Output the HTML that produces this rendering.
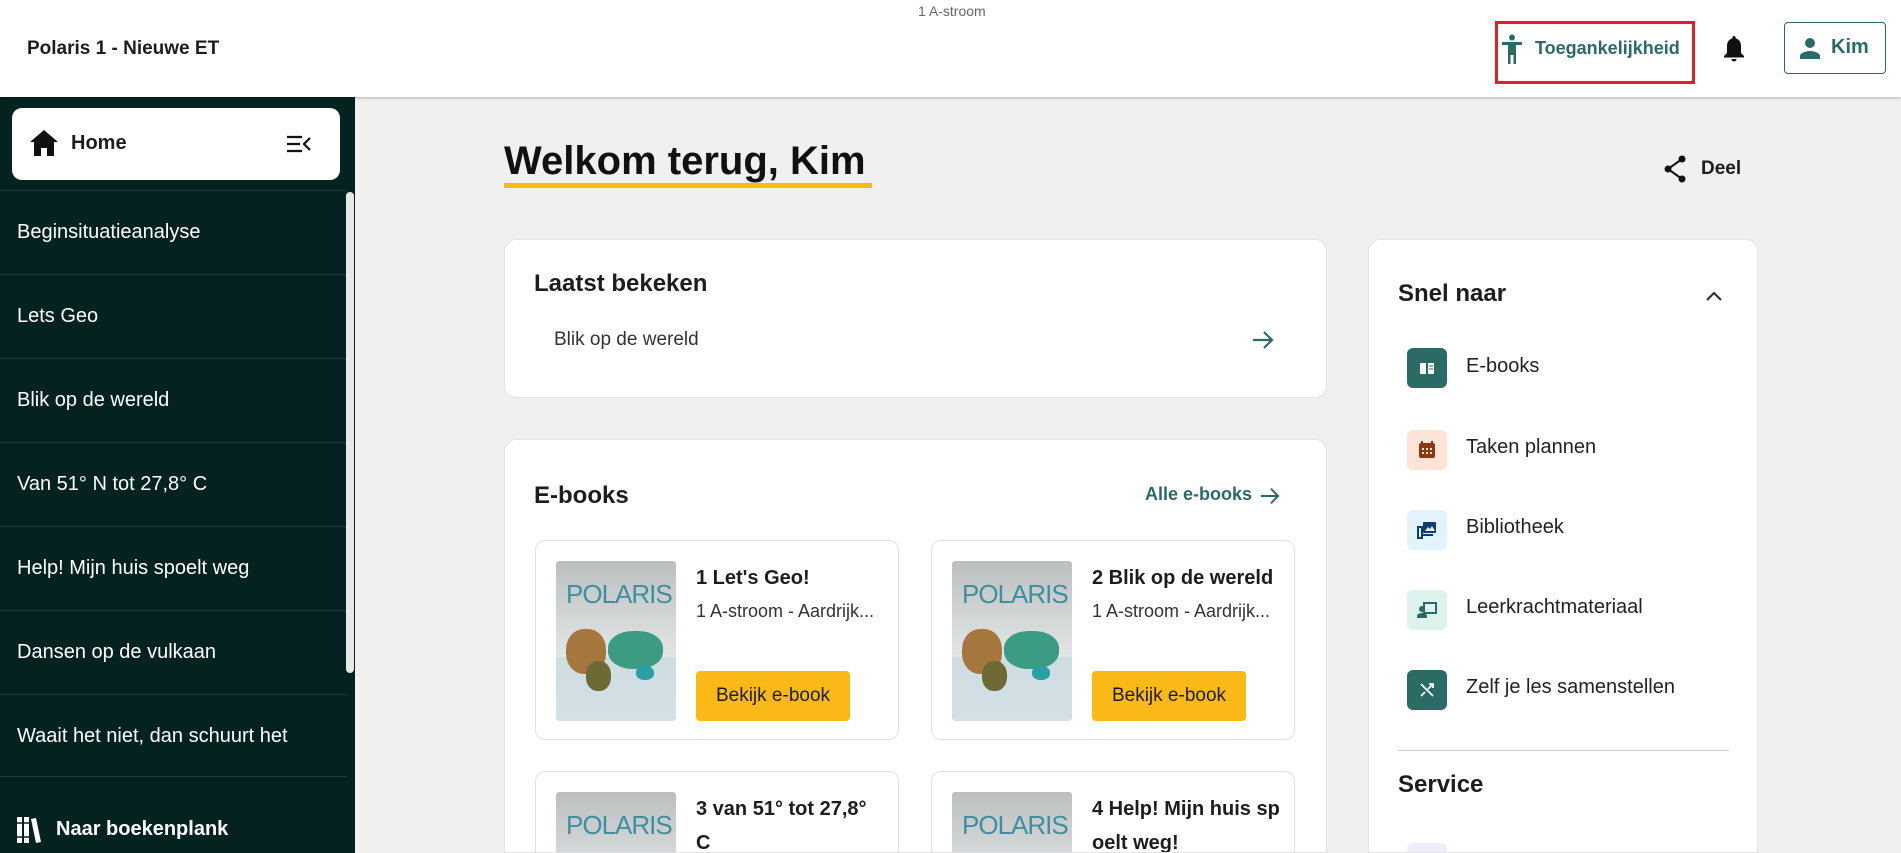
<!DOCTYPE html>
<html><head><meta charset="utf-8"><style>
*{box-sizing:border-box;margin:0;padding:0}
html,body{width:1901px;height:853px;overflow:hidden}
body{font-family:"Liberation Sans",sans-serif;background:#eff0ef;position:relative;color:#1d1d1b}
#wrap{position:absolute;left:0;top:0;width:1901px;height:853px;overflow:hidden}
.abs{position:absolute}
.hdr{left:0;top:0;width:1901px;height:97px;background:#fff;box-shadow:0 1px 3px rgba(0,0,0,.25);z-index:2}
.side{left:0;top:97px;width:355px;height:756px;background:#04221f;overflow:hidden}
.item{position:absolute;left:0;width:347px;height:84px;border-top:1px solid #1e3d39;color:#fff;font-size:20px;padding-left:17px;display:flex;align-items:center}
.card{background:#fff;border-radius:12px;border:1px solid #e3e5e4;overflow:hidden}
.bk{background:#fff;border-radius:10px;border:1px solid #e0e2e1;width:364px;height:200px}
.cover{position:absolute;left:20px;top:20px;width:120px;height:160px;background:linear-gradient(#bcbfbf,#e3e6e6 60%,#cfdde3 60%,#d3e1e7);border-radius:3px;overflow:hidden}
.cover .t{position:absolute;left:10px;top:18px;font-size:26px;color:#3f8fa0;letter-spacing:-1px}
.blob{position:absolute;border-radius:45%}
.btn{position:absolute;left:160px;top:130px;width:154px;height:50px;background:#fbb917;border-radius:4px;font-size:19px;display:flex;align-items:center;justify-content:center;color:#1d1d1b}
.bt{position:absolute;left:160px;top:20px;font-size:20px;font-weight:600;line-height:34px;width:190px}
.bs{position:absolute;left:160px;top:60px;font-size:18px;color:#333}
.q{position:absolute;left:38px;width:40px;height:40px;border-radius:6px;display:flex;align-items:center;justify-content:center}
.ql{position:absolute;left:97px;font-size:20px;color:#222}
</style></head><body><div id="wrap">
<div class="abs hdr">
 <div class="abs" style="left:27px;top:38px;font-size:19px;font-weight:700">Polaris 1 - Nieuwe ET</div>
 <div class="abs" style="left:918px;top:3px;font-size:14px;color:#666">1 A-stroom</div>
 <div class="abs" style="left:1495px;top:21px;width:200px;height:63px;border:3px solid #e31e24"></div>
 <svg class="abs" style="left:1500px;top:34px" width="24" height="30" viewBox="0 0 24 30"><circle cx="12" cy="3.5" r="3" fill="#2a6b66"/><path d="M2 8h20v3h-6v19h-2.5v-9h-3v9H8V11H2z" fill="#2a6b66"/></svg>
 <div class="abs" style="left:1535px;top:38px;font-size:18px;font-weight:600;color:#2a6b66">Toegankelijkheid</div>
 <svg class="abs" style="left:1722px;top:35px" width="24" height="28" viewBox="0 0 24 28"><path d="M12 1c-1 0-1.6.7-1.6 1.6v.8C6.5 4.4 5 7.6 5 11v7l-3 3v1.5h20V21l-3-3v-7c0-3.4-1.5-6.6-5.4-7.6v-.8C13.6 1.7 13 1 12 1zM9.5 24a2.5 2.5 0 005 0z" fill="#111"/></svg>
 <div class="abs" style="left:1784px;top:22px;width:102px;height:52px;border:1.5px solid #2a6b66;border-radius:4px"></div>
 <svg class="abs" style="left:1799px;top:37px" width="22" height="22" viewBox="0 0 22 22"><circle cx="11" cy="6" r="5" fill="#2a6b66"/><path d="M1 22v-3c0-3 6-5 10-5s10 2 10 5v3z" fill="#2a6b66"/></svg>
 <div class="abs" style="left:1831px;top:36px;font-size:20px;font-weight:700;color:#2a6b66">Kim</div>
</div>

<div class="abs side">
 <div class="abs" style="left:12px;top:11px;width:328px;height:72px;background:#fff;border-radius:10px">
  <svg class="abs" style="left:18px;top:22px" width="28" height="26" viewBox="0 0 28 26"><path d="M14 0L0 12h4v14h7v-8h6v8h7V12h4z" fill="#111"/></svg>
  <div class="abs" style="left:59px;top:24px;font-size:20px;font-weight:700">Home</div>
  <svg class="abs" style="left:275px;top:27px" width="24" height="18" viewBox="0 0 24 18"><path d="M0 2h15M0 9h13M0 16h15M23 3l-6 6 6 6" stroke="#111" stroke-width="2.2" fill="none"/></svg>
 </div>
 <div class="item" style="top:93px">Beginsituatieanalyse</div>
 <div class="item" style="top:177px">Lets Geo</div>
 <div class="item" style="top:261px">Blik op de wereld</div>
 <div class="item" style="top:345px">Van 51° N tot 27,8° C</div>
 <div class="item" style="top:429px">Help! Mijn huis spoelt weg</div>
 <div class="item" style="top:513px">Dansen op de vulkaan</div>
 <div class="item" style="top:597px">Waait het niet, dan schuurt het</div>
 <div class="abs" style="left:0;top:679px;width:347px;border-top:1px solid #1e3d39"></div>
 <div class="abs" style="left:346px;top:95px;width:8px;height:481px;background:#e8e8e8;border-radius:4px"></div>
 <svg class="abs" style="left:16px;top:718px" width="28" height="28" viewBox="0 0 28 28"><path d="M1 2h5v26H1zM8 2h5v26H8zM15 4l5-1 5 24-5 1z" fill="#fff"/><path d="M1 8h5M1 22h5M8 8h5M8 22h5" stroke="#04221f" stroke-width="1.5"/></svg>
 <div class="abs" style="left:56px;top:721px;font-size:20px;font-weight:700;color:#fff">Naar boekenplank</div>
</div>

<div class="abs" style="left:504px;top:139px;font-size:40px;font-weight:700;color:#111">Welkom terug, Kim</div>
<div class="abs" style="left:504px;top:183px;width:368px;height:5px;background:#fbb917"></div>
<svg class="abs" style="left:1663px;top:155px" width="24" height="28" viewBox="0 0 24 28"><circle cx="19" cy="4" r="3.5" fill="#111"/><circle cx="5" cy="14" r="3.5" fill="#111"/><circle cx="19" cy="24" r="3.5" fill="#111"/><path d="M19 4L5 14l14 10" stroke="#111" stroke-width="2" fill="none"/></svg>
<div class="abs" style="left:1701px;top:158px;font-size:19px;font-weight:600">Deel</div>

<div class="abs card" style="left:504px;top:239px;width:823px;height:159px">
 <div class="abs" style="left:29px;top:30px;font-size:24px;font-weight:700">Laatst bekeken</div>
 <div class="abs" style="left:49px;top:89px;font-size:19px;color:#333">Blik op de wereld</div>
 <svg class="abs" style="left:747px;top:89px" width="22" height="22" viewBox="0 0 22 22"><path d="M1 11h19M12 3l8 8-8 8" stroke="#2a6b66" stroke-width="2.2" fill="none"/></svg>
</div>

<div class="abs card" style="left:504px;top:439px;width:823px;height:414px;border-bottom-left-radius:0;border-bottom-right-radius:0">
 <div class="abs" style="left:29px;top:42px;font-size:24px;font-weight:700">E-books</div>
 <div class="abs" style="left:640px;top:44px;font-size:18px;font-weight:600;color:#2a6b66">Alle e-books</div>
 <svg class="abs" style="left:755px;top:46px" width="20" height="20" viewBox="0 0 22 22"><path d="M1 11h19M12 3l8 8-8 8" stroke="#2a6b66" stroke-width="2.2" fill="none"/></svg>

 <div class="abs bk" style="left:30px;top:100px">
  <div class="cover"><div class="t">POLARIS</div><div class="blob" style="left:10px;top:68px;width:40px;height:45px;background:#a5773f"></div><div class="blob" style="left:52px;top:70px;width:55px;height:38px;background:#3c9c83"></div><div class="blob" style="left:30px;top:100px;width:25px;height:30px;background:#6f6a35"></div><div class="blob" style="left:80px;top:105px;width:18px;height:14px;background:#2aa0a6"></div></div>
  <div class="bt">1 Let's Geo!</div><div class="bs">1 A-stroom - Aardrijk...</div>
  <div class="btn">Bekijk e-book</div>
 </div>
 <div class="abs bk" style="left:426px;top:100px">
  <div class="cover"><div class="t">POLARIS</div><div class="blob" style="left:10px;top:68px;width:40px;height:45px;background:#a5773f"></div><div class="blob" style="left:52px;top:70px;width:55px;height:38px;background:#3c9c83"></div><div class="blob" style="left:30px;top:100px;width:25px;height:30px;background:#6f6a35"></div><div class="blob" style="left:80px;top:105px;width:18px;height:14px;background:#2aa0a6"></div></div>
  <div class="bt">2 Blik op de wereld</div><div class="bs">1 A-stroom - Aardrijk...</div>
  <div class="btn">Bekijk e-book</div>
 </div>
 <div class="abs bk" style="left:30px;top:331px">
  <div class="cover"><div class="t">POLARIS</div></div>
  <div class="bt">3 van 51° tot 27,8° C</div>
 </div>
 <div class="abs bk" style="left:426px;top:331px">
  <div class="cover"><div class="t">POLARIS</div></div>
  <div class="bt" style="word-break:break-all">4 Help! Mijn huis spoelt weg!</div>
 </div>
</div>

<div class="abs card" style="left:1368px;top:239px;width:390px;height:614px;border-bottom-left-radius:0;border-bottom-right-radius:0">
 <div class="abs" style="left:29px;top:40px;font-size:24px;font-weight:700">Snel naar</div>
 <svg class="abs" style="left:336px;top:50px" width="18" height="12" viewBox="0 0 18 12"><path d="M2 10l7-7 7 7" stroke="#333" stroke-width="2.2" fill="none"/></svg>
 <div class="q" style="top:108px;background:#2a6b66"><svg width="16" height="14" viewBox="0 0 16 14"><path d="M1 2h6v11H1zM9 2h6v11H9z" fill="#fff"/><path d="M10 5h4M10 8h4" stroke="#2a6b66"/></svg></div>
 <div class="ql" style="top:115px">E-books</div>
 <div class="q" style="top:190px;background:#fde4d6"><svg width="18" height="18" viewBox="0 0 18 18"><path d="M4 0v3M14 0v3" stroke="#8a3a12" stroke-width="2"/><rect x="1" y="2" width="16" height="15" rx="2" fill="#8a3a12"/><path d="M4 8h2M8 8h2M12 8h2M4 12h2M8 12h2M12 12h2" stroke="#fde4d6" stroke-width="2"/></svg></div>
 <div class="ql" style="top:196px">Taken plannen</div>
 <div class="q" style="top:270px;background:#e3f3fd"><svg width="20" height="18" viewBox="0 0 20 18"><rect x="6" y="1" width="13" height="11" rx="1" fill="#0d3f6e"/><path d="M8 10l3-4 2 2 2-3 3 5z" fill="#e3f3fd"/><path d="M1 6h4v11H1zM5 14h11" stroke="#0d3f6e" stroke-width="2" fill="none"/></svg></div>
 <div class="ql" style="top:276px">Bibliotheek</div>
 <div class="q" style="top:350px;background:#def2ee"><svg width="20" height="16" viewBox="0 0 20 16"><rect x="7" y="1" width="12" height="10" fill="none" stroke="#2a6b66" stroke-width="2"/><circle cx="5" cy="7" r="3" fill="#2a6b66"/><path d="M0 16v-2c0-2 3-3 5-3s5 1 5 3v2z" fill="#2a6b66"/></svg></div>
 <div class="ql" style="top:356px">Leerkrachtmateriaal</div>
 <div class="q" style="top:430px;background:#2a6b66"><svg width="14" height="14" viewBox="0 0 14 14"><path d="M1 1l12 12M9 1h4v4M13 1L8 6M1 13l4-4" stroke="#fff" stroke-width="1.8" fill="none"/></svg></div>
 <div class="ql" style="top:436px">Zelf je les samenstellen</div>
 <div class="abs" style="left:29px;top:510px;width:331px;border-top:1.5px solid #ccc"></div>
 <div class="abs" style="left:29px;top:531px;font-size:24px;font-weight:700">Service</div>
 <div class="q" style="top:603px;background:#f1eefc"></div>
</div>
</div></body></html>
